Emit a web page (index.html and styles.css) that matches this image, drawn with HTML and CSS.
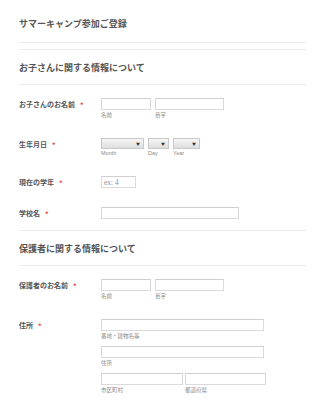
FILE: index.html
```html
<!DOCTYPE html>
<html lang="ja">
  <head>
    <meta charset="UTF-8" />
    <title>サマーキャンプ参加ご登録</title>
    <link rel="stylesheet" href="styles.css">
  </head>
  <body>
    <main class="form">
      <div class="form-header">
        <h1 class="title">サマーキャンプ参加ご登録</h1>
      </div>

      <section class="section">
        <h2 class="heading">お子さんに関する情報について</h2>
        <div class="fields">
          <div class="row">
            <div class="label">お子さんのお名前<span class="req">*</span></div>
            <div class="inputs">
              <div class="pair">
                <div class="field">
                  <input class="text w-first" type="text" />
                  <div class="sub">名前</div>
                </div>
                <div class="field">
                  <input class="text w-last" type="text" />
                  <div class="sub">苗字</div>
                </div>
              </div>
            </div>
          </div>

          <div class="row">
            <div class="label">生年月日<span class="req">*</span></div>
            <div class="inputs">
              <div class="pair">
                <div class="field">
                  <div class="select w-month"><span class="arrow">▼</span></div>
                  <div class="sub latin">Month</div>
                </div>
                <div class="field">
                  <div class="select w-day"><span class="arrow">▼</span></div>
                  <div class="sub latin">Day</div>
                </div>
                <div class="field">
                  <div class="select w-year"><span class="arrow">▼</span></div>
                  <div class="sub latin">Year</div>
                </div>
              </div>
            </div>
          </div>

          <div class="row">
            <div class="label">現在の学年<span class="req">*</span></div>
            <div class="inputs">
              <input class="text w-grade" type="text" placeholder="ex: 4" />
            </div>
          </div>

          <div class="row">
            <div class="label">学校名<span class="req">*</span></div>
            <div class="inputs">
              <input class="text w-school" type="text" />
            </div>
          </div>
        </div>
      </section>

      <section class="section">
        <h2 class="heading">保護者に関する情報について</h2>
        <div class="fields">
          <div class="row">
            <div class="label">保護者のお名前<span class="req">*</span></div>
            <div class="inputs">
              <div class="pair">
                <div class="field">
                  <input class="text w-first" type="text" />
                  <div class="sub">名前</div>
                </div>
                <div class="field">
                  <input class="text w-last" type="text" />
                  <div class="sub">苗字</div>
                </div>
              </div>
            </div>
          </div>

          <div class="row">
            <div class="label">住所<span class="req">*</span></div>
            <div class="inputs stack">
              <div class="field">
                <input class="text w-addr" type="text" />
                <div class="sub">番地・建物名等</div>
              </div>
              <div class="field">
                <input class="text w-addr" type="text" />
                <div class="sub">住所</div>
              </div>
              <div class="pair tight">
                <div class="field">
                  <input class="text w-city" type="text" />
                  <div class="sub">市区町村</div>
                </div>
                <div class="field">
                  <input class="text w-pref" type="text" />
                  <div class="sub">都道府県</div>
                </div>
              </div>
            </div>
          </div>
        </div>
      </section>
    </main>
  </body>
</html>
```

FILE: styles.css
```css
html,
body {
  margin: 0;
  padding: 0;
  background: #fff;
  font-family: "Noto Sans CJK JP", "Noto Sans", sans-serif;
  color: #555;
}

.form {
  padding: 0 18px 0 19px;
}

.form-header {
  padding: 18px 0 12px;
  border-bottom: 1px solid #ececec;
}

.title,
.heading {
  margin: 0;
  font-size: 9px;
  line-height: 12px;
  font-weight: bold;
  color: #555;
}

.section {
  margin-top: 6px;
  border-top: 1px solid #ececec;
}

.section + .section {
  margin-top: 0;
}

.heading {
  padding: 12px 0 10px;
  border-bottom: 1px solid #ececec;
}

.fields {
  padding: 3px 0 2px;
}

.row {
  display: flex;
  padding: 10px 0 9px;
}

.label {
  width: 82px;
  flex-shrink: 0;
  font-size: 7px;
  line-height: 12px;
  font-weight: bold;
  color: #555;
}

.req {
  color: #e8413e;
  margin-left: 5px;
  font-size: 7px;
  position: relative;
  top: 1px;
}

.inputs {
  display: flex;
  flex-direction: column;
}

.stack {
  gap: 6px;
}

.pair {
  display: flex;
  gap: 4px;
}

.pair.tight {
  gap: 2px;
}

.field {
  display: flex;
  flex-direction: column;
}

.text {
  box-sizing: border-box;
  height: 12px;
  margin: 0;
  padding: 0 2px;
  border: 1px solid #dadada;
  border-top-color: #cfcfcf;
  border-radius: 0;
  background: #fff;
  font-family: "Liberation Serif", serif;
  font-size: 7.5px;
  color: #555;
  outline: none;
}

.text::placeholder {
  color: #8f8f8f;
}

.select {
  box-sizing: border-box;
  height: 11px;
  display: flex;
  align-items: center;
  justify-content: flex-end;
  padding-right: 3px;
  border: 1px solid #c9c9c9;
  background: linear-gradient(#f6f6f6, #dedede);
}

.arrow {
  font-size: 4px;
  line-height: 4px;
  color: #333;
}

.sub {
  margin-top: 1px;
  font-size: 5.5px;
  line-height: 8px;
  color: #8a8a8a;
}

.sub.latin {
  font-family: "Liberation Sans", Arial, sans-serif;
  margin-top: 0;
}

.w-first { width: 50px; }
.w-last { width: 69px; }
.w-month { width: 43px; }
.w-day { width: 21px; }
.w-year { width: 27px; }
.w-grade { width: 35px; }
.w-school { width: 138px; }
.w-addr { width: 163px; }
.w-city { width: 82px; }
.w-pref { width: 81px; }
```
